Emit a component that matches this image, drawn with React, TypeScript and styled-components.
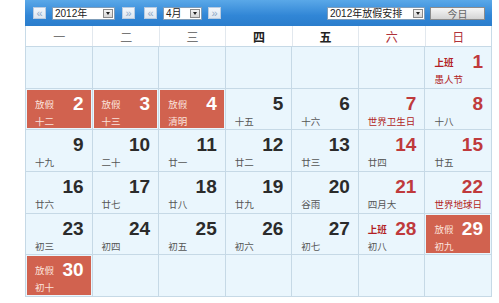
import React from 'react';
import styled, { createGlobalStyle, css } from 'styled-components';

const Global = createGlobalStyle`
  html, body { margin: 0; padding: 0; background: #fff; }
  body { font-family: "Liberation Sans", "Noto Sans CJK SC", Arial, sans-serif; }
`;

const Wrap = styled.div`
  width: 467px;
  margin-left: 25px;
`;

const Toolbar = styled.div`
  height: 26px;
  display: flex;
  align-items: center;
  padding: 0 7px 0 8px;
  box-sizing: border-box;
  background: linear-gradient(#5aa8e8, #3186d6 60%, #2a7dcc);
`;

const NavBtn = styled.div<{ $ml?: number }>`
  width: 13px;
  height: 12px;
  margin-left: ${p => p.$ml ?? 0}px;
  display: flex;
  align-items: center;
  justify-content: center;
  box-sizing: border-box;
  border: 1px solid #b9cbe0;
  background: linear-gradient(#f4f7fb, #dde6f0);
  color: #8fa8c6;
  font-size: 11px;
  line-height: 1;
  font-family: "Liberation Sans", sans-serif;
`;

const Select = styled.div<{ $w: number; $ml?: number }>`
  width: ${p => p.$w}px;
  height: 13px;
  margin-left: ${p => p.$ml ?? 0}px;
  display: flex;
  align-items: center;
  box-sizing: border-box;
  border: 1px solid #7f9db9;
  background: #fff;
  font-size: 10px;
  color: #222;
  font-family: "Liberation Sans", "Noto Sans CJK SC", sans-serif;
`;

const SelectText = styled.span`
  flex: 1;
  padding-left: 2px;
  line-height: 11px;
  white-space: nowrap;
  overflow: hidden;
`;

const Arrow = styled.div`
  width: 10px;
  height: 9px;
  margin-right: 1px;
  box-sizing: border-box;
  border: 1px solid #8a8a8a;
  background: linear-gradient(#f3f3f3, #d6d6d6);
  display: flex;
  align-items: center;
  justify-content: center;
  &::after {
    content: '';
    border-left: 2.5px solid transparent;
    border-right: 2.5px solid transparent;
    border-top: 3px solid #222;
  }
`;

const Spacer = styled.div`
  flex: 1;
`;

const TodayBtn = styled.div`
  width: 55px;
  height: 13px;
  margin-left: 5px;
  box-sizing: border-box;
  border: 1px solid #8c8c8c;
  background: linear-gradient(#f6f6f6, #d4d4d4);
  color: #666;
  font-size: 10px;
  line-height: 11px;
  text-align: center;
  font-family: "Noto Sans CJK SC", sans-serif;
`;

const WeekRow = styled.div`
  display: grid;
  grid-template-columns: repeat(7, 1fr);
  height: 20px;
  background: #fff;
  border-left: 1px solid #c8dbe8;
  border-right: 1px solid #c8dbe8;
`;

const WeekCell = styled.div<{ $kind: 'normal' | 'bold' | 'red' }>`
  display: flex;
  align-items: center;
  justify-content: center;
  border-left: 1px solid #e2e8ee;
  &:first-child { border-left: none; }
  font-family: "Noto Sans CJK SC", sans-serif;
  font-size: 12px;
  color: #777;
  ${p => p.$kind === 'bold' && css`color: #222; font-weight: bold;`}
  ${p => p.$kind === 'red' && css`color: #b0323a;`}
`;

const Grid = styled.div`
  display: grid;
  grid-template-columns: repeat(7, 1fr);
  grid-template-rows: repeat(6, 1fr);
  gap: 1px;
  padding: 1px;
  height: 251px;
  box-sizing: border-box;
  background: #c6d9e6;
`;

const Cell = styled.div`
  background: #eaf6fd;
  min-width: 0;
`;

const Inner = styled.div<{ $holiday?: boolean }>`
  height: 100%;
  box-sizing: border-box;
  padding: 5px 8px 0 9px;
  display: flex;
  flex-direction: column;
  ${p => p.$holiday && css`
    margin: 1px;
    height: calc(100% - 2px);
    padding: 4px 7px 0 8px;
    background: #d1624f;
  `}
`;

const Top = styled.div`
  display: flex;
  align-items: center;
  height: 20px;
`;

const Label = styled.span<{ $tone: 'work' | 'off' }>`
  font-family: "Noto Sans CJK SC", sans-serif;
  font-size: 9.5px;
  ${p => p.$tone === 'work'
    ? css`color: #b21e24; font-weight: bold;`
    : css`color: #fbe3dd;`}
`;

const Num = styled.span<{ $tone: 'dark' | 'red' | 'white' }>`
  margin-left: auto;
  font-family: "Liberation Sans", Arial, sans-serif;
  font-weight: bold;
  font-size: 19px;
  line-height: 20px;
  color: ${p => p.$tone === 'red' ? '#bf3a3c' : p.$tone === 'white' ? '#fff' : '#2b2b2b'};
`;

const Lunar = styled.div<{ $tone: 'gray' | 'red' | 'white' }>`
  margin-top: 1px;
  font-family: "Noto Sans CJK SC", sans-serif;
  font-size: 9.5px;
  line-height: 12px;
  white-space: nowrap;
  color: ${p => p.$tone === 'red' ? '#b21e24' : p.$tone === 'white' ? '#fbe3dd' : '#555'};
`;

type Day = {
  d: number;
  lunar: string;
  label?: '上班' | '放假';
  redNum?: boolean;
  redLunar?: boolean;
};

const days: Day[] = [
  { d: 1, lunar: '愚人节', label: '上班', redNum: true, redLunar: true },
  { d: 2, lunar: '十二', label: '放假' },
  { d: 3, lunar: '十三', label: '放假' },
  { d: 4, lunar: '清明', label: '放假' },
  { d: 5, lunar: '十五' },
  { d: 6, lunar: '十六' },
  { d: 7, lunar: '世界卫生日', redNum: true, redLunar: true },
  { d: 8, lunar: '十八', redNum: true },
  { d: 9, lunar: '十九' },
  { d: 10, lunar: '二十' },
  { d: 11, lunar: '廿一' },
  { d: 12, lunar: '廿二' },
  { d: 13, lunar: '廿三' },
  { d: 14, lunar: '廿四', redNum: true },
  { d: 15, lunar: '廿五', redNum: true },
  { d: 16, lunar: '廿六' },
  { d: 17, lunar: '廿七' },
  { d: 18, lunar: '廿八' },
  { d: 19, lunar: '廿九' },
  { d: 20, lunar: '谷雨' },
  { d: 21, lunar: '四月大', redNum: true },
  { d: 22, lunar: '世界地球日', redNum: true, redLunar: true },
  { d: 23, lunar: '初三' },
  { d: 24, lunar: '初四' },
  { d: 25, lunar: '初五' },
  { d: 26, lunar: '初六' },
  { d: 27, lunar: '初七' },
  { d: 28, lunar: '初八', label: '上班', redNum: true },
  { d: 29, lunar: '初九', label: '放假' },
  { d: 30, lunar: '初十', label: '放假' },
];

const weekdays: { t: string; k: 'normal' | 'bold' | 'red' }[] = [
  { t: '一', k: 'normal' },
  { t: '二', k: 'normal' },
  { t: '三', k: 'normal' },
  { t: '四', k: 'bold' },
  { t: '五', k: 'bold' },
  { t: '六', k: 'red' },
  { t: '日', k: 'red' },
];

const DayCell = ({ day }: { day: Day }) => {
  const off = day.label === '放假';
  return (
    <Cell>
      <Inner $holiday={off}>
        <Top>
          {day.label && <Label $tone={off ? 'off' : 'work'}>{day.label}</Label>}
          <Num $tone={off ? 'white' : day.redNum ? 'red' : 'dark'}>{day.d}</Num>
        </Top>
        <Lunar $tone={off ? 'white' : day.redLunar ? 'red' : 'gray'}>{day.lunar}</Lunar>
      </Inner>
    </Cell>
  );
};

export default function App() {
  const leading = 6;
  const cells: (Day | null)[] = [
    ...Array(leading).fill(null),
    ...days,
  ];
  while (cells.length < 42) cells.push(null);

  return (
    <>
      <Global />
      <Wrap>
        <Toolbar>
          <NavBtn>«</NavBtn>
          <Select $w={63} $ml={6}>
            <SelectText>2012年</SelectText>
            <Arrow />
          </Select>
          <NavBtn $ml={7}>»</NavBtn>
          <NavBtn $ml={9}>«</NavBtn>
          <Select $w={39} $ml={6}>
            <SelectText>4月</SelectText>
            <Arrow />
          </Select>
          <NavBtn $ml={6}>»</NavBtn>
          <Spacer />
          <Select $w={98}>
            <SelectText>2012年放假安排</SelectText>
            <Arrow />
          </Select>
          <TodayBtn>今日</TodayBtn>
        </Toolbar>
        <WeekRow>
          {weekdays.map(w => (
            <WeekCell key={w.t} $kind={w.k}>{w.t}</WeekCell>
          ))}
        </WeekRow>
        <Grid>
          {cells.map((c, i) => (c ? <DayCell key={i} day={c} /> : <Cell key={i} />))}
        </Grid>
      </Wrap>
    </>
  );
}
